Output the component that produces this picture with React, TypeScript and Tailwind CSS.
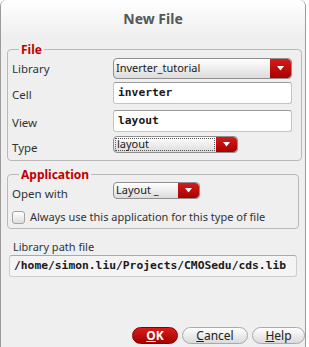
import React from "react";

const ComboArrow = () => (
  <div className="flex h-full w-[21px] shrink-0 items-center justify-center rounded-r-[4px] bg-gradient-to-b from-[#d61a1a] to-[#a80000]">
    <svg width="7" height="5" viewBox="0 0 7 5">
      <path d="M0 0 L7 0 L3.5 4.5 Z" fill="#fff" />
    </svg>
  </div>
);

const Combo = ({ text, className, focused }: { text: string; className: string; focused?: boolean }) => (
  <div
    className={`flex items-stretch overflow-hidden rounded-[4px] border border-[#8f8f8f] bg-gradient-to-b from-[#ffffff] to-[#dcdcdc] ${className}`}
  >
    <div className="flex flex-1 items-center px-[1px]">
      <div
        className={`flex h-[13px] flex-1 items-center pl-[1px] text-[11px] text-[#1a1a1a] ${
          focused ? "border border-dotted border-[#555]" : ""
        }`}
      >
        {text}
      </div>
    </div>
    <ComboArrow />
  </div>
);

const TextBox = ({ value }: { value: string }) => (
  <div className="flex h-[22px] w-[179px] items-center rounded-[3px] border border-[#c4c4c4] border-t-[#9a9a9a] bg-white pl-[4px] font-['DejaVu_Sans_Mono',monospace] text-[11.3px] font-bold text-[#1a1a1a]">
    {value}
  </div>
);

const Btn = ({ children, primary, w }: { children: React.ReactNode; primary?: boolean; w: string }) => (
  <button
    className={`flex h-[17px] ${w} items-center justify-center rounded-full border text-[12px] ${
      primary
        ? "border-[#8a0000] bg-gradient-to-b from-[#d81b1b] to-[#a60000] font-bold text-white"
        : "border-[#a9a9a9] bg-gradient-to-b from-[#ffffff] to-[#dadada] text-[#222]"
    }`}
  >
    {children}
  </button>
);

export default function App() {
  return (
    <div className="h-[347px] w-[309px] bg-white font-['Noto_Sans',sans-serif] text-[#2e3436]">
      <div className="flex h-[347px] w-[306px] flex-col rounded-t-[6px] border-x border-[#9b9b9b] bg-[#efefef]">
        {/* Title */}
        <div className="flex h-[36px] items-center justify-center rounded-t-[6px] bg-gradient-to-b from-[#ffffff] to-[#efefef] text-[14px] font-bold text-[#52595b]">
          New File
        </div>

        {/* File group */}
        <fieldset className="mx-[6px] mt-[6px] rounded-[4px] border border-[#b9b9b9] pb-[7px] pl-[4px] pr-[9px] pt-[1px]">
          <legend className="ml-[7px] px-[2px] text-[12px] leading-[15px] font-bold text-[#c00000]">File</legend>
          <div className="flex h-[21px] items-center">
            <span className="w-[101px] text-[11.5px]">Library</span>
            <Combo text="Inverter_tutorial" className="h-[21px] w-[179px]" />
          </div>
          <div className="mt-[3px] flex h-[22px] items-center">
            <span className="mt-[3px] w-[101px] text-[11.5px]">Cell</span>
            <TextBox value="inverter" />
          </div>
          <div className="mt-[6px] flex h-[22px] items-center">
            <span className="mt-[3px] w-[101px] text-[11.5px]">View</span>
            <TextBox value="layout" />
          </div>
          <div className="mt-[4px] flex h-[17px] items-center">
            <span className="mt-[6px] w-[101px] text-[11.5px]">Type</span>
            <Combo text="layout" className="h-[17px] w-[125px]" focused />
          </div>
        </fieldset>

        {/* Application group */}
        <fieldset className="mx-[6px] mt-[6px] rounded-[4px] border border-[#b9b9b9] pb-[3px] pl-[4px] pr-[9px] pt-0">
          <legend className="ml-[7px] px-[2px] text-[12px] leading-[15px] font-bold text-[#c00000]">Application</legend>
          <div className="flex h-[17px] items-center">
            <span className="mt-[6px] w-[101px] text-[11.5px]">Open with</span>
            <Combo text="Layout _" className="h-[17px] w-[87px]" />
          </div>
          <div className="mt-[11px] flex h-[15px] items-center">
            <div className="h-[13px] w-[13px] rounded-[3px] border border-[#a3a3a3] bg-gradient-to-b from-[#ffffff] to-[#dedede]" />
            <span className="ml-[5px] text-[11px]">Always use this application for this type of file</span>
          </div>
        </fieldset>

        {/* Library path */}
        <div className="ml-[12px] mt-[10px] text-[11px] leading-[15px]">Library path file</div>
        <div className="mx-[8px] mt-[1px] flex h-[22px] items-center rounded-[3px] border border-[#cdcdcd] border-t-[#a9a9a9] bg-[#f4f4f4] pl-[4px] font-['DejaVu_Sans_Mono',monospace] text-[11.3px] font-bold text-[#1a1a1a]">
          /home/simon.liu/Projects/CMOSedu/cds.lib
        </div>

        {/* Buttons */}
        <div className="mt-auto mb-[3px] flex justify-end gap-[4px] pr-0">
          <Btn primary w="w-[46px]">
            <span className="underline">O</span>K
          </Btn>
          <Btn w="w-[66px]">
            <span className="underline">C</span>ancel
          </Btn>
          <Btn w="w-[53px]">
            <span className="underline">H</span>elp
          </Btn>
        </div>
      </div>
    </div>
  );
}
